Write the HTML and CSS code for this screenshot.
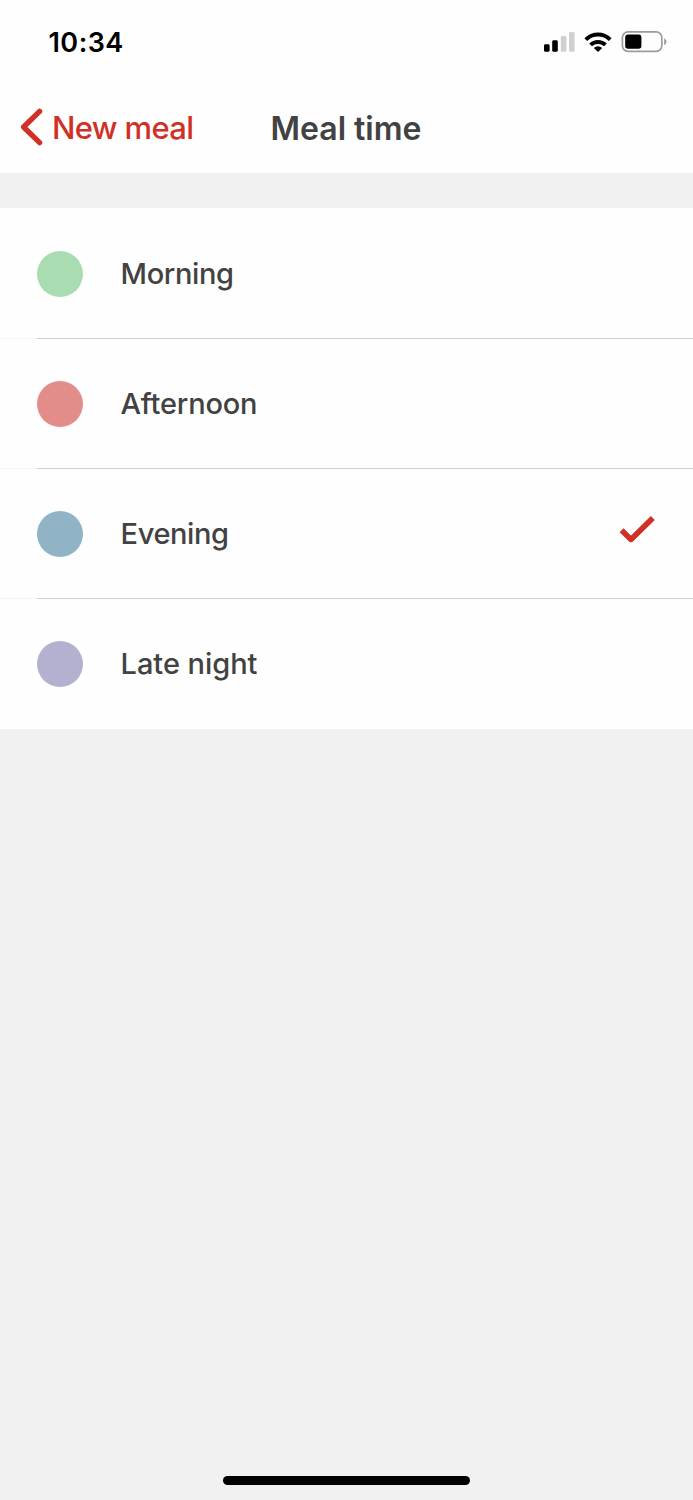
FILE: index.html
```html
<!DOCTYPE html>
<html lang="en">
<head>
<meta charset="utf-8">
<title>Meal time</title>
<link rel="stylesheet" href="styles.css">
</head>
<body>
<div class="screen">
  <header class="header">
    <div class="status">
      <span class="time">10:34</span>
      <svg class="indicators" width="124" height="24" viewBox="543 30 124 24" aria-hidden="true">
        <rect x="544" y="44.3" width="5.6" height="7.5" rx="1.4"/>
        <rect x="552.2" y="40.3" width="5.6" height="11.5" rx="1.4"/>
        <rect x="560.8" y="36" width="5.6" height="15.8" rx="1.4" fill="#d0d0d0"/>
        <rect x="569" y="32" width="5.6" height="19.8" rx="1.4" fill="#d0d0d0"/>
        <g fill="none" stroke="#000" stroke-width="4">
          <path d="M585.8 39.6a17.4 17.4 0 0 1 24.4 0"/>
          <path d="M590.6 44.9a10.7 10.7 0 0 1 14.8 0"/>
        </g>
        <path d="M593.8 48a6.5 6.5 0 0 1 8.4 0L598 52z"/>
        <rect x="622.4" y="31.9" width="39.4" height="19.4" rx="5.6" fill="none" stroke="#9b9b9b" stroke-width="1.7"/>
        <rect x="625.2" y="34.6" width="16.2" height="14.2" rx="2.8"/>
        <path d="M664.2 38.2v7c3-1.5 3-5.5 0-7z" fill="#9b9b9b"/>
      </svg>
    </div>
    <nav class="nav">
      <a class="back">
        <svg class="chevron" width="24" height="40" viewBox="20 107 24 40" aria-hidden="true"><path d="M39.6 111.3L23.6 127L39.6 142.7"/></svg>
        <span class="back-label">New meal</span>
      </a>
      <h1 class="title">Meal time</h1>
    </nav>
  </header>
  <ul class="list">
    <li class="row"><span class="dot morning"></span><span class="label morning-label">Morning</span></li>
    <li class="row"><span class="dot afternoon"></span><span class="label afternoon-label">Afternoon</span></li>
    <li class="row"><span class="dot evening"></span><span class="label evening-label">Evening</span>
      <svg class="check" width="38" height="30" viewBox="618 515 38 30" aria-hidden="true"><path d="M621.6 530.2L631 539.4L652.8 518"/></svg>
    </li>
    <li class="row"><span class="dot night"></span><span class="label night-label">Late night</span></li>
  </ul>
  <footer class="footer"><div class="home"></div></footer>
</div>
</body>
</html>
```
FILE: styles.css
```css
* { box-sizing: border-box; }
body { margin: 0; background: #f1f1f1; font-family: Inter, "Liberation Sans", sans-serif; color: #424242; }
.screen { height: 1500px; display: flex; flex-direction: column; }
.header { height: 173.4px; background: #fefefe; }
.status { height: 84px; padding: 0 26px 0 48.5px; display: flex; align-items: center; justify-content: space-between; }
.time { padding-top: 2px; font-size: 27px; font-weight: 600; letter-spacing: 0.45px; color: #000; line-height: 34px; }
.nav { height: 86px; display: grid; grid-template-columns: 250.5px 1fr; align-items: center; padding-left: 20px; }
.back { display: flex; align-items: center; color: #d03025; }
.chevron path { fill: none; stroke: #d03025; stroke-width: 5.3; stroke-linecap: round; stroke-linejoin: round; }
.back-label { margin-left: 8px; padding-top: 2px; font-size: 31px; font-weight: 450; letter-spacing: -0.65px; line-height: 38px; }
.title { margin: 0; padding-top: 3px; font-size: 32px; font-weight: 600; line-height: 40px; }
.list { list-style: none; margin: 35px 0 0; padding: 0; background: #fefefe; }
.row { position: relative; height: 130px; display: flex; align-items: center; padding: 0 37px; }
.row:first-child { height: 130.6px; }
.row:not(:last-child)::after { content: ""; position: absolute; left: 0; right: 0; bottom: 0; height: 1px; background: linear-gradient(to right, #f5f5f5 37px, #cfcfcf 37px); }
.dot { width: 46px; height: 46px; border-radius: 50%; }
.morning { background: #a9dcb0; }
.afternoon { background: #e28d8a; }
.evening { background: #90b4c5; }
.night { background: #b3b1cf; }
.label { margin-left: 37.6px; font-size: 29px; font-weight: 500; line-height: 36px; }
.morning-label { padding-top: 1px; letter-spacing: -0.4px; }
.afternoon-label { letter-spacing: -0.2px; }
.evening-label { letter-spacing: -0.4px; }
.night-label { letter-spacing: -0.05px; }
.check { margin-left: auto; margin-bottom: 8px; }
.check path { fill: none; stroke: #d03025; stroke-width: 5.6; stroke-linejoin: round; }
.footer { margin-top: auto; height: 24px; display: flex; justify-content: center; }
.home { width: 247px; height: 9px; border-radius: 5px; background: #000; }
```
